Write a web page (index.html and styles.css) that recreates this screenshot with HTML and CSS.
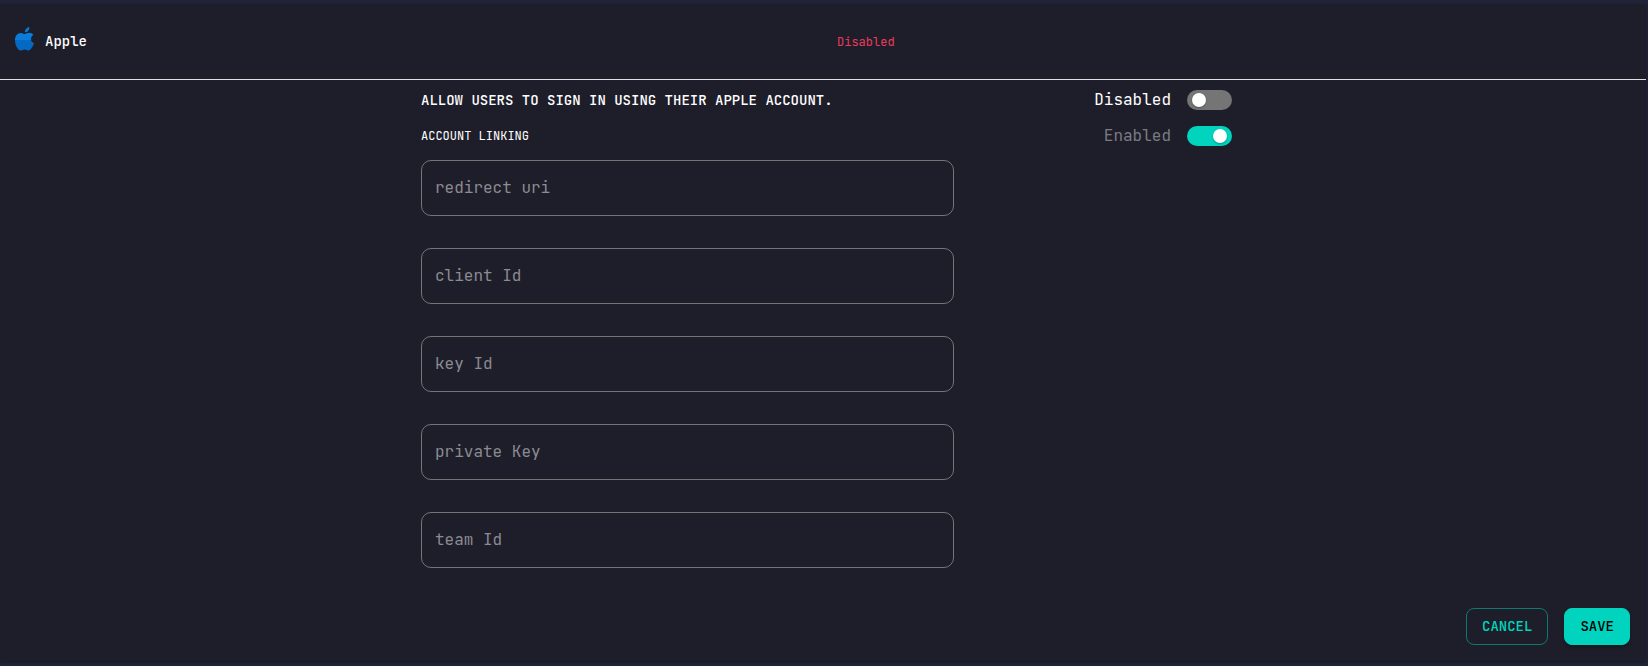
FILE: index.html
```html
<!DOCTYPE html>
<html lang="en">
<head>
<meta charset="utf-8">
<title>Apple sign-in</title>
<link rel="stylesheet" href="styles.css">
</head>
<body>
<form class="card">
  <header class="card-header">
    <div class="provider">
      <svg class="logo" width="20" height="24" viewBox="0 0 20 24" aria-hidden="true">
        <defs>
          <linearGradient id="blue" x1="0" y1="0" x2="0" y2="1">
            <stop offset="0.42" stop-color="#0a7ddb"/>
            <stop offset="0.42" stop-color="#0568c3"/>
          </linearGradient>
        </defs>
        <path fill="#0a78d3" d="M14.300 0c.4 1.500-.2 2.900-1.100 3.900-.9 1-2.100 1.500-3.300 1.400-.2-1.400.5-2.700 1.300-3.600C12 .8 13.300.1 14.300 0z"/>
        <path fill="url(#blue)" d="M18.300 8c-1.500.9-2.300 2.200-2.300 4 0 2 1.100 3.600 3 4.300-.4 1.300-1.100 2.700-1.900 3.900-1.100 1.700-2.200 3.300-3.900 3.300-1.500 0-2-.9-3.700-.9-1.600 0-2.300.9-3.700.9-1.600 0-2.800-1.500-3.800-3.100C.7 18.300 0 15.600 0 13c0-4.100 2.600-7.100 5.700-7.100 1.700 0 2.900 1.100 4.100 1.100 1.100 0 2.600-1.200 4.700-1.200 1.500 0 2.900.8 3.800 2.200z"/>
      </svg>
      <span class="provider-name">Apple</span>
    </div>
    <span class="status">Disabled</span>
  </header>
  <div class="settings">
    <div class="row">
      <span class="title">ALLOW USERS TO SIGN IN USING THEIR APPLE ACCOUNT.</span>
      <label class="switch"><span>Disabled</span><input class="toggle" type="checkbox"></label>
    </div>
    <div class="row">
      <span class="subtitle">ACCOUNT LINKING</span>
      <label class="switch switch-muted"><span>Enabled</span><input class="toggle" type="checkbox" checked></label>
    </div>
    <div class="fields">
      <input class="field" type="text" placeholder="redirect uri" aria-label="redirect uri">
      <input class="field" type="text" placeholder="client Id" aria-label="client Id">
      <input class="field" type="text" placeholder="key Id" aria-label="key Id">
      <input class="field" type="text" placeholder="private Key" aria-label="private Key">
      <input class="field" type="text" placeholder="team Id" aria-label="team Id">
    </div>
  </div>
  <footer class="actions">
    <button class="button cancel" type="button">CANCEL</button>
    <button class="button save" type="submit">SAVE</button>
  </footer>
</form>
</body>
</html>
```
FILE: styles.css
```css
* {
  box-sizing: border-box;
}

body {
  margin: 0;
  padding: 4px 2px 5px 0;
  background: #212439;
  color: #fff;
  font-family: "JetBrains Mono", "DejaVu Sans Mono", "Liberation Mono", monospace;
  font-size: 16px;
  line-height: 24px;
}

.card {
  background: #1e1e2a;
  box-shadow: 0 1px 3px rgba(0, 0, 0, 0.4);
}

.card-header {
  display: grid;
  grid-template-columns: 1fr 1fr;
  align-items: center;
  padding: 23px 0 28px;
  border-bottom: 1px solid #e0e0e0;
}

.provider {
  display: flex;
  align-items: center;
  gap: 10px;
  padding-left: 15px;
}

.provider-name {
  padding-top: 4px;
  font-size: 14px;
  font-weight: 500;
  line-height: 20px;
}

.status {
  padding: 6px 0 0 14px;
  font-size: 12px;
  line-height: 18px;
  color: #ea3a5d;
}

.settings {
  max-width: 818px;
  margin: 0 auto;
  padding: 2px 0 0 7px;
}

.row {
  display: flex;
  align-items: center;
  justify-content: space-between;
  height: 36px;
}

.title {
  font-size: 14px;
  font-weight: 500;
}

.subtitle {
  font-size: 12px;
}

.switch {
  display: flex;
  align-items: center;
  gap: 16px;
}

.switch-muted {
  color: #7b7b84;
}

.toggle {
  appearance: none;
  display: flex;
  align-items: center;
  width: 45px;
  height: 20px;
  margin: 0;
  padding: 0 5px;
  border-radius: 10px;
  background: #757575;
}

.toggle::before {
  content: "";
  width: 14px;
  height: 14px;
  border-radius: 50%;
  background: #fff;
  box-shadow: 0 1px 2px rgba(0, 0, 0, 0.3);
}

.toggle:checked {
  justify-content: flex-end;
  background: #00d4be;
}

.fields {
  display: grid;
  gap: 32px;
  width: 100%;
  max-width: 533px;
  padding-top: 6px;
}

.field {
  width: 100%;
  height: 56px;
  padding: 0 13px 2px;
  border: 1px solid #757575;
  border-radius: 10px;
  background: transparent;
  color: #fff;
  font: inherit;
}

.field::placeholder {
  color: #8b8b91;
  opacity: 1;
}

.actions {
  display: flex;
  justify-content: flex-end;
  gap: 16px;
  padding: 40px 16px 16px;
}

.button {
  height: 37px;
  padding: 0 15px 2px;
  border: 1px solid #00d4be;
  border-radius: 8px;
  font-family: inherit;
  font-size: 14px;
  font-weight: 500;
}

.cancel {
  border-color: #0f796f;
  background: transparent;
  color: #00d4be;
}

.save {
  background: #00d4be;
  color: #000;
  box-shadow: 0 2px 3px rgba(0, 0, 0, 0.3);
}
```
